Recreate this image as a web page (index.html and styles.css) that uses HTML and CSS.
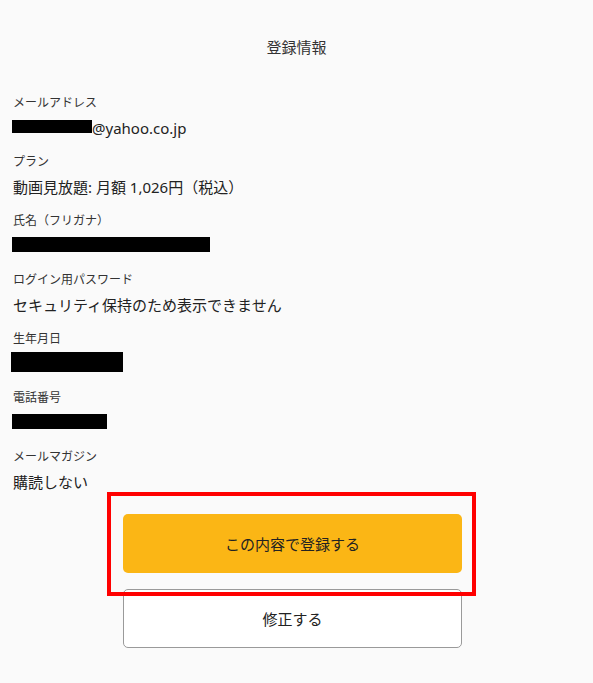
FILE: index.html
```html
<!DOCTYPE html>
<html lang="ja">
<head>
  <meta charset="UTF-8" />
  <title>登録情報</title>
  <link rel="stylesheet" href="styles.css">
</head>
<body>
  <div class="page">
    <h1 class="title">登録情報</h1>

    <dl class="info">
      <div class="row">
        <dt>メールアドレス</dt>
        <dd><span class="mask mask-mail"></span>@yahoo.co.jp</dd>
      </div>
      <div class="row">
        <dt>プラン</dt>
        <dd>動画見放題: 月額 1,026円（税込）</dd>
      </div>
      <div class="row">
        <dt>氏名（フリガナ）</dt>
        <dd><span class="mask mask-name"></span></dd>
      </div>
      <div class="row">
        <dt>ログイン用パスワード</dt>
        <dd>セキュリティ保持のため表示できません</dd>
      </div>
      <div class="row">
        <dt>生年月日</dt>
        <dd><span class="mask mask-birth"></span></dd>
      </div>
      <div class="row">
        <dt>電話番号</dt>
        <dd><span class="mask mask-tel"></span></dd>
      </div>
      <div class="row">
        <dt>メールマガジン</dt>
        <dd>購読しない</dd>
      </div>
    </dl>

    <div class="actions">
      <button class="btn btn-primary">この内容で登録する</button>
      <button class="btn btn-secondary">修正する</button>
      <div class="highlight"></div>
    </div>
  </div>
</body>
</html>
```

FILE: styles.css
```css
body {
  margin: 0;
  background: #fafafa;
  color: #222;
  font-family: "Noto Sans", "Noto Sans CJK JP", sans-serif;
}

.page {
  padding: 36px 13px 0;
}

.title {
  margin: 0;
  font-size: 15px;
  line-height: 22px;
  font-weight: normal;
  text-align: center;
  color: #333;
}

.info {
  margin: 37px 0 0;
}

.row {
  display: flex;
  flex-direction: column;
  gap: 8px;
  margin-bottom: 17px;
}

.row dt {
  font-size: 12px;
  line-height: 16px;
  color: #333;
}

.row dd {
  margin: 0;
  height: 18px;
  display: flex;
  align-items: center;
  font-size: 15px;
  line-height: 18px;
  white-space: nowrap;
}

.mask {
  display: inline-block;
  background: #000;
}

.mask-mail {
  width: 80px;
  height: 13px;
  margin: -3px 0 0 -1px;
}

.mask-name {
  width: 198px;
  height: 15px;
  margin: -3px 0 0 -1px;
}

.mask-birth {
  width: 112px;
  height: 20px;
  margin: -4px 0 0 -2px;
}

.mask-tel {
  width: 95px;
  height: 15px;
  margin: -3px 0 0 -1px;
}

.actions {
  position: relative;
  width: 339px;
  margin: 23px 0 0 110px;
  display: flex;
  flex-direction: column;
  gap: 16px;
}

.btn {
  height: 59px;
  border-radius: 5px;
  font-family: inherit;
  font-size: 15px;
  color: #222;
  cursor: pointer;
}

.btn-primary {
  background: #fbb615;
  border: none;
}

.btn-secondary {
  background: #fff;
  border: 1px solid #9a9a9a;
}

.highlight {
  position: absolute;
  left: -16px;
  top: -22px;
  width: 369px;
  height: 104px;
  box-sizing: border-box;
  border: 4px solid #ff0000;
  pointer-events: none;
}
```
